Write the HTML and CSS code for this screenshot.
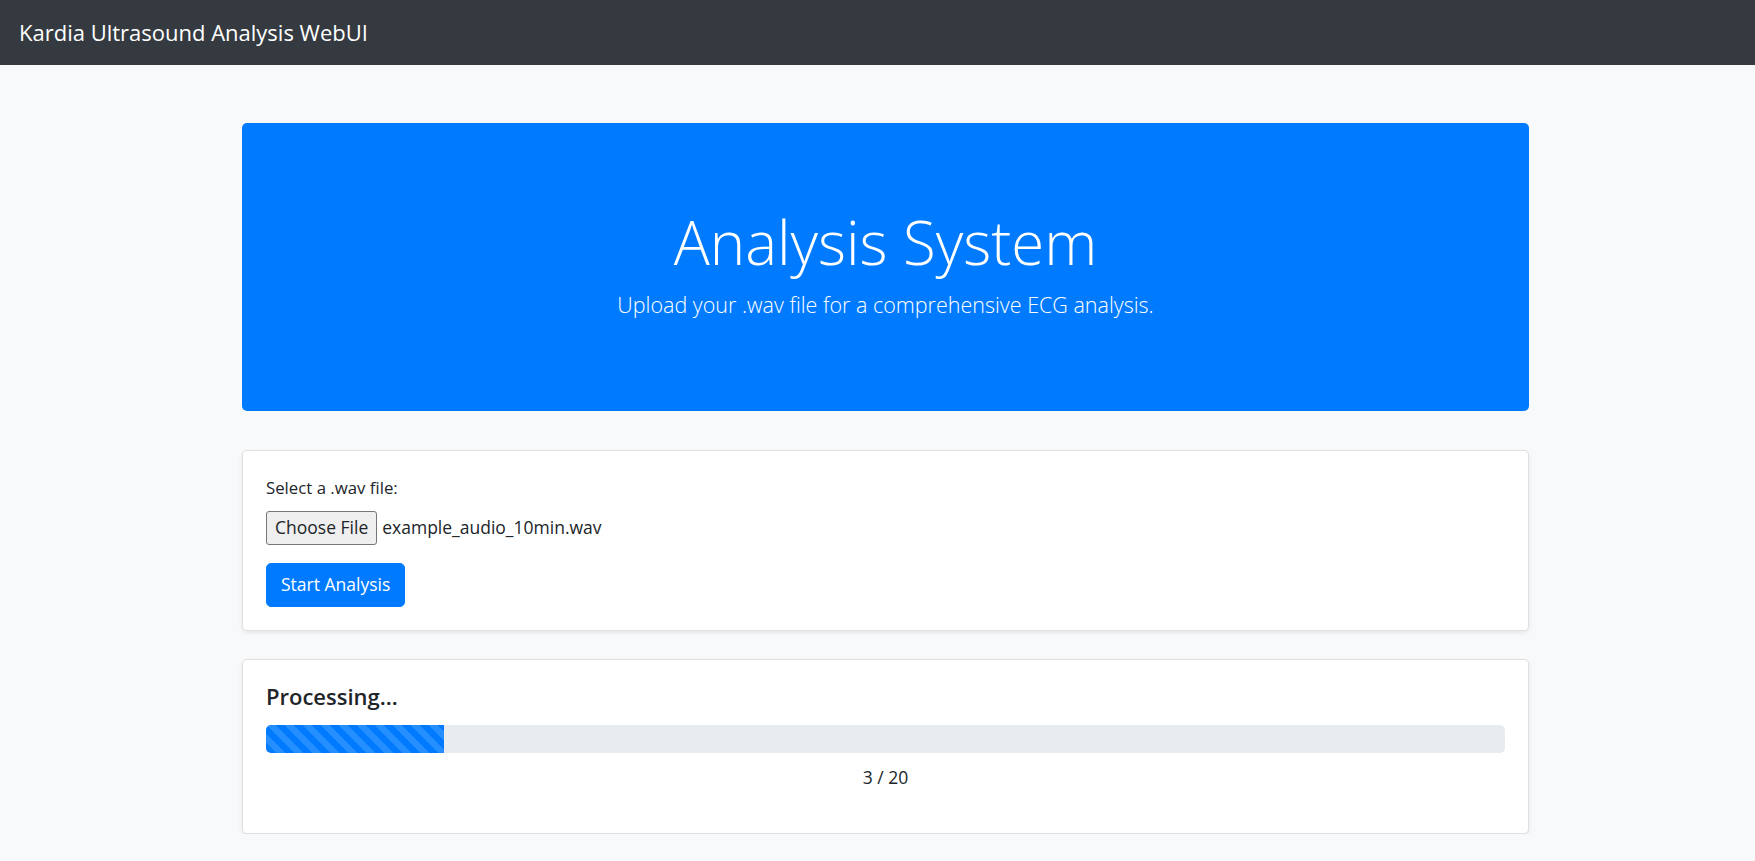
FILE: index.html
```html
<!DOCTYPE html>
<html lang="en">
<head>
<meta charset="utf-8">
<title>Kardia Ultrasound Analysis WebUI</title>
<link rel="stylesheet" href="styles.css">
</head>
<body>
<nav class="navbar">
  <span class="brand">Kardia Ultrasound Analysis WebUI</span>
</nav>
<main class="container">
  <section class="jumbotron">
    <h1 class="display">Analysis System</h1>
    <p class="lead">Upload your .wav file for a comprehensive ECG analysis.</p>
  </section>
  <section class="card">
    <div class="card-body">
      <div class="form-group">
        <label class="label">Select a .wav file:</label>
        <div class="file-input">
          <button class="file-btn" type="button">Choose File</button>
          <span class="file-name">example_audio_10min.wav</span>
        </div>
      </div>
      <button class="btn-primary" type="button">Start Analysis</button>
    </div>
  </section>
  <section class="card card-progress">
    <div class="card-body">
      <h5 class="card-title">Processing...</h5>
      <div class="progress">
        <div class="progress-bar" style="width: 14.4%"></div>
      </div>
      <p class="progress-text">3 / 20</p>
    </div>
  </section>
</main>
</body>
</html>
```
FILE: styles.css
```css
* { box-sizing: border-box; }
html, body { margin: 0; padding: 0; }
body {
  background: #f8f9fa;
  color: #212529;
  font-family: "Open Sans", "Noto Sans", "Liberation Sans", sans-serif;
  font-size: 17.5px;
  line-height: 1.5;
}
.navbar {
  height: 65px;
  background: #343a40;
  display: flex;
  align-items: center;
  padding: 0 19px;
}
.brand {
  color: #fff;
  font-size: 22px;
  line-height: 1;
  padding-bottom: 2px;
}
.container {
  margin: 58px 0 0 242px;
  width: 1287px;
}
.jumbotron {
  background: #007bff;
  color: #fff;
  border-radius: 5px;
  height: 288px;
  display: flex;
  flex-direction: column;
  align-items: center;
  justify-content: center;
  text-align: center;
  padding-bottom: 8px;
}
.display {
  margin: 0;
  font-size: 60px;
  font-weight: 300;
  line-height: 1.2;
}
.lead {
  margin: 12px 0 0;
  font-size: 21.5px;
  font-weight: 300;
  line-height: 1.4;
}
.card {
  margin-top: 39px;
  background: #fff;
  border: 1px solid rgba(0,0,0,.125);
  border-radius: 5px;
  box-shadow: 0 2px 4px rgba(0,0,0,.075);
}
.card-progress { margin-top: 28px; }
.card-body { padding: 23px; }
.form-group { margin-bottom: 18px; }
.label {
  display: block;
  line-height: 27.6px;
  margin-bottom: 9px;
  font-size: 16.8px;
}
.file-input {
  display: flex;
  align-items: center;
  height: 34px;
}
.file-btn {
  height: 34px;
  padding: 0 8px;
  font: inherit;
  font-size: 17.5px;
  color: #212529;
  background: #efefef;
  border: 1px solid #767676;
  border-radius: 3px;
  margin-right: 5px;
}
.file-name { font-size: 17.5px; }
.btn-primary {
  height: 44px;
  padding: 0 14px;
  font: inherit;
  font-size: 17.5px;
  color: #fff;
  background: #007bff;
  border: 1px solid #007bff;
  border-radius: 5px;
  display: block;
}
.card-title {
  margin: 0 0 15px;
  font-size: 22px;
  font-weight: 600;
  line-height: 27.6px;
}
.progress {
  height: 28px;
  background: #e9ecef;
  border-radius: 5px;
  overflow: hidden;
  display: flex;
}
.progress-bar {
  height: 100%;
  background-color: #007bff;
  background-image: linear-gradient(45deg, rgba(255,255,255,.15) 25%, transparent 25%, transparent 50%, rgba(255,255,255,.15) 50%, rgba(255,255,255,.15) 75%, transparent 75%, transparent);
  background-size: 18px 18px;
}
.progress-text {
  text-align: center;
  margin: 11px 0 18px;
  line-height: 27.6px;
}
```
